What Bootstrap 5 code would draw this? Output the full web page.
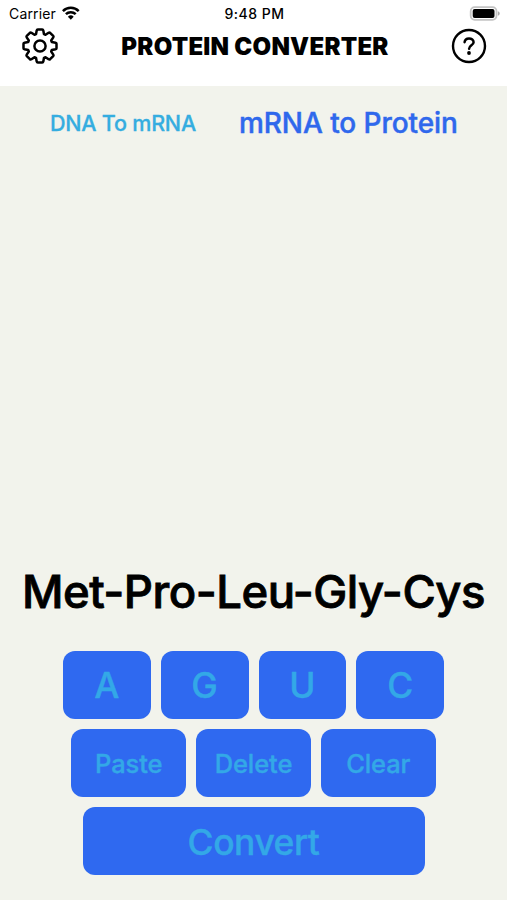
<!DOCTYPE html>
<html lang="en">
<head>
<meta charset="utf-8">
<meta name="viewport" content="width=device-width, initial-scale=1">
<title>Protein Converter</title>
<link href="https://cdn.jsdelivr.net/npm/bootstrap@5.3.0/dist/css/bootstrap.min.css" rel="stylesheet">
<style>
body{font-family:Inter,"Liberation Sans",sans-serif;background:#f2f3ec;color:#000}
.app{height:900px;overflow:hidden}
.top{height:86px}
.status{height:27px;font-size:14px;line-height:27px;padding:0 7px 0 9px}
.status>div{flex:1 1 0}
.clock{font-weight:500;font-size:14px;letter-spacing:.5px}
.carrier{letter-spacing:.15px}
.wifi{margin:-2px 0 0 5px}
.titlebar{height:38px;padding:0 19px 0 21px}
.titlebar h1{font-size:24px;font-weight:900;line-height:38px;letter-spacing:.25px;padding-top:1px}
.tabs{height:74px}
.tab{background:none;border:0;padding:0;white-space:nowrap;line-height:74px}
.tab-dna{font-size:21.5px;font-weight:500;color:#35ade0;margin-left:50px;width:189px;text-align:left;letter-spacing:-.22px;-webkit-text-stroke:.3px}
.tab-protein{font-size:28px;font-weight:500;color:#2f68ec;text-align:left;letter-spacing:-.07px;-webkit-text-stroke:.45px}
.result{font-size:45.5px;font-weight:500;line-height:60px;height:89px;white-space:nowrap;text-align:center;letter-spacing:-.52px;-webkit-text-stroke:.8px}
.keys{gap:10px;padding-bottom:25px}
.keys .d-flex{gap:10px}
.key{height:68px;border:0;border-radius:12px;background:#2f69f0;color:#33a8e7;font-weight:500;padding:2px 0 0;line-height:66px;-webkit-text-stroke:.4px}
.key:hover{background:#2f69f0;color:#33a8e7}
.key-base{width:87.8px;font-size:35.5px}
.key-edit{width:114.8px;font-size:25.5px;letter-spacing:-.1px}
.key-convert{width:342px;font-size:35.5px;letter-spacing:-.5px;padding-top:3px}
</style>
<script src="https://cdn.jsdelivr.net/npm/bootstrap@5.3.0/dist/js/bootstrap.bundle.min.js"></script>
</head>
<body>
<div class="app d-flex flex-column">
  <header class="top bg-white">
    <div class="status d-flex">
      <div class="carrier d-flex align-items-center"><span>Carrier</span>
        <svg class="wifi" width="20" height="16" viewBox="0 0 20 16" fill="none" stroke="#000" stroke-width="2.5"><path d="M1.9 6.1a11.1 11.1 0 0 1 15.8 0M4.9 9.2a6.9 6.9 0 0 1 9.8 0"/><path d="M9.8 14.8 6.9 11.8a4.1 4.1 0 0 1 5.8 0z" fill="#000" stroke="none"/></svg>
      </div>
      <div class="clock text-center">9:48 PM</div>
      <div class="d-flex justify-content-end align-items-center">
        <svg width="31" height="16" viewBox="0 0 31 16"><rect x="1.7" y="1.2" width="25.8" height="12.6" rx="4" fill="#fff" stroke="#c4c4c4" stroke-width="1.8"/><rect x="3.7" y="3" width="21.8" height="9" rx="2"/><path d="M28.9 5.2q1.8.6 1.8 2.3t-1.8 2.3z" fill="#aaa"/></svg>
      </div>
    </div>
    <div class="titlebar d-flex justify-content-between align-items-center">
      <svg width="38" height="38" viewBox="-19 -19 38 38" fill="none" stroke="#000" stroke-width="2.5" stroke-linejoin="round"><circle r="5.6"/><path d="M-4-11.8-3.3-15.5Q-3.1-16.5-2.2-16.5H2.2Q3.1-16.5 3.3-15.5L4-11.8 5.5-11.2 8.6-13.3Q9.4-13.8 10.1-13.2L13.2-10.1Q13.8-9.4 13.3-8.6L11.2-5.5 11.8-4 15.5-3.3Q16.5-3.1 16.5-2.2V2.2Q16.5 3.1 15.5 3.3L11.8 4 11.2 5.5 13.3 8.6Q13.8 9.4 13.2 10.1L10.1 13.2Q9.4 13.8 8.6 13.3L5.5 11.2 4 11.8 3.3 15.5Q3.1 16.5 2.2 16.5H-2.2Q-3.1 16.5-3.3 15.5L-4 11.8-5.5 11.2-8.6 13.3Q-9.4 13.8-10.1 13.2L-13.2 10.1Q-13.8 9.4-13.3 8.6L-11.2 5.5-11.8 4-15.5 3.3Q-16.5 3.1-16.5 2.2V-2.2Q-16.5-3.1-15.5-3.3L-11.8-4-11.2-5.5-13.3-8.6Q-13.8-9.4-13.2-10.1L-10.1-13.2Q-9.4-13.8-8.6-13.3L-5.5-11.2z"/></svg>
      <h1 class="m-0">PROTEIN CONVERTER</h1>
      <svg width="37" height="38" viewBox="-18 -19 37 38" fill="none" stroke="#000" stroke-width="2.4"><circle r="16"/><path d="M-4.4-3.8C-4.1-6.4-2.4-7.6 0-7.6c2.6 0 4.6 1.5 4.6 3.8C4.6-.8.1-.6.1 2.7" stroke-width="2.5" stroke-linecap="round"/><circle cy="7" r="1.9" fill="#000" stroke="none"/></svg>
    </div>
  </header>
  <nav class="tabs d-flex">
    <button class="tab tab-dna">DNA To mRNA</button>
    <button class="tab tab-protein">mRNA to Protein</button>
  </nav>
  <main class="mt-auto">
    <div class="result">Met-Pro-Leu-Gly-Cys</div>
    <div class="keys d-flex flex-column align-items-center">
      <div class="d-flex"><button class="btn key key-base">A</button><button class="btn key key-base">G</button><button class="btn key key-base">U</button><button class="btn key key-base">C</button></div>
      <div class="d-flex"><button class="btn key key-edit">Paste</button><button class="btn key key-edit">Delete</button><button class="btn key key-edit">Clear</button></div>
      <button class="btn key key-convert">Convert</button>
    </div>
  </main>
</div>
</body>
</html>
